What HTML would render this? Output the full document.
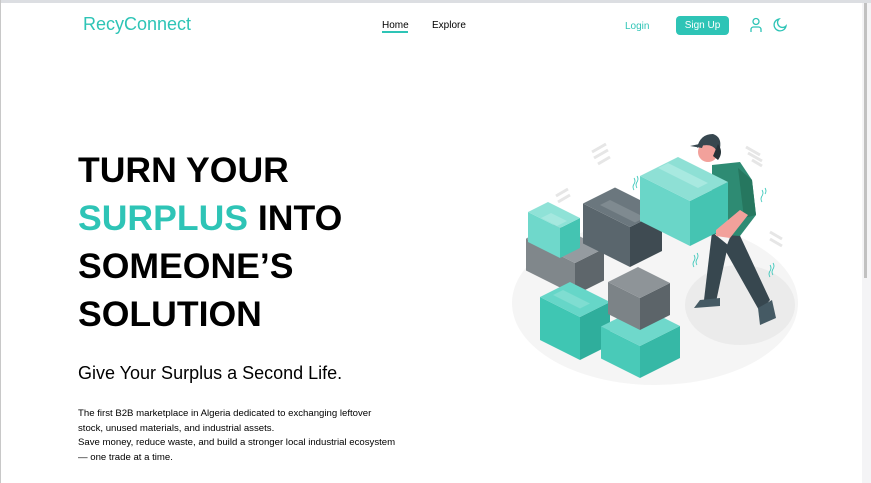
<!DOCTYPE html>
<html><head><meta charset="utf-8"><style>
*{margin:0;padding:0;box-sizing:border-box}
body{width:871px;height:483px;overflow:hidden;background:#fff;font-family:"Liberation Sans",Arial,sans-serif;position:relative}
.topb{position:absolute;left:0;top:0;width:871px;height:3px;background:#dcdee2}
.leftb{position:absolute;left:0;top:0;width:1px;height:483px;background:#c8c8c8}
.track{position:absolute;left:862px;top:3px;width:9px;height:480px;background:#f4f4f6}
.thumb{position:absolute;left:864px;top:3px;width:3px;height:275px;background:#c1c1c1}
.abs{position:absolute;white-space:nowrap}
.logo{left:83px;top:14px;font-size:18px;color:#2ec4b6}
.nav{font-size:10px;color:#000;top:20px}
.ul{position:absolute;left:382px;top:31px;width:26px;height:2px;background:#2ec4b6}
.login{left:625px;top:21px;font-size:10px;color:#2ec4b6}
.btn{left:676px;top:16px;width:53px;height:19px;background:#2ec4b6;border-radius:4px;color:#fff;font-size:10px;text-align:center;line-height:19px}
h1{position:absolute;left:78px;top:146px;font-size:35.6px;line-height:48px;font-weight:700;color:#000}
h1 span{color:#2ec4b6}
.sub{left:78px;top:363px;font-size:18px;color:#000}
.p{left:78px;top:407px;font-size:9.6px;line-height:14.6px;color:#000}
</style></head><body>
<div class="topb"></div><div class="leftb"></div>
<div class="track"></div><div class="thumb"></div>
<div class="abs logo">RecyConnect</div>
<div class="abs nav" style="left:382px">Home</div>
<div class="ul"></div>
<div class="abs nav" style="left:432px">Explore</div>
<div class="abs login">Login</div>
<div class="abs btn">Sign Up</div>
<svg class="abs" style="left:749px;top:17px" width="14" height="16" viewBox="0 0 14 16" fill="none" stroke="#2ec4b6" stroke-width="1.3"><circle cx="7" cy="4.5" r="3"/><path d="M2 15v-2.5a2.5 2.5 0 0 1 2.5-2.5h5a2.5 2.5 0 0 1 2.5 2.5V15"/></svg>
<svg class="abs" style="left:772px;top:17px" width="16" height="16" viewBox="0 0 16 16" fill="none" stroke="#2ec4b6" stroke-width="1.3"><path d="M7 2a6 6 0 1 0 7 7 4.7 4.7 0 0 1-7-7z"/></svg>

<h1>TURN YOUR<br><span>SURPLUS</span> INTO<br>SOMEONE’S<br>SOLUTION</h1>
<div class="abs sub">Give Your Surplus a Second Life.</div>
<div class="abs p">The first B2B marketplace in Algeria dedicated to exchanging leftover<br>stock, unused materials, and industrial assets.<br>Save money, reduce waste, and build a stronger local industrial ecosystem<br>— one trade at a time.</div>

<svg class="abs" style="left:0;top:0" width="871" height="483" viewBox="0 0 871 483">
<ellipse cx="655" cy="303" rx="143" ry="82" fill="#f5f5f5"/>
<ellipse cx="740" cy="305" rx="55" ry="40" fill="#ebebeb"/>
<g stroke="#e6e6e6" stroke-width="3">
<path d="M592 152l14-8M594 158l14-8M598 164l12-7"/><path d="M746 147l14 8M748 153l14 8M752 160l10 6"/>
<path d="M556 196l12-7M558 202l12-7"/><path d="M770 232l12 7M770 239l12 7"/>
</g>
<g><polygon points="526,270.5 575,295 575,263 526,238.5" fill="#80878b"/><polygon points="575,295 604,280.5 604,248.5 575,263" fill="#5e666b"/><polygon points="575,263 604,248.5 555,224 526,238.5" fill="#959ba0"/></g>
<g><polygon points="528,242 560,258 560,228 528,212" fill="#6fd8cb"/><polygon points="560,258 580,248 580,218 560,228" fill="#44c4b2"/><polygon points="560,228 580,218 548,202 528,212" fill="#8fe2d7"/><polygon points="541,218 551,213 567,221 557,226" fill="#a5e8df"/></g>
<g><polygon points="583,243.5 630,267 630,227 583,203.5" fill="#5a666d"/><polygon points="630,267 662,251 662,211 630,227" fill="#3f4b52"/><polygon points="630,227 662,211 615,187.5 583,203.5" fill="#6b777e"/><polygon points="600,205 610,200 645,217.5 635,222.5" fill="#7f8a90"/></g>
<g><polygon points="540,340 580,360 580,317 540,297" fill="#3fc6b3"/><polygon points="580,360 610,345 610,302 580,317" fill="#2fae9c"/><polygon points="580,317 610,302 570,282 540,297" fill="#66d6c8"/><polygon points="553,295 563,290 590,303.5 580,308.5" fill="#7fddd1"/></g>
<g><polygon points="601,358.5 640,378 640,346 601,326.5" fill="#49cab8"/><polygon points="640,378 680,358 680,326 640,346" fill="#36b8a6"/><polygon points="640,346 680,326 641,306.5 601,326.5" fill="#6fd8cb"/></g>
<g><polygon points="608,314 640,330 640,298 608,282" fill="#7c8387"/><polygon points="640,330 670,315 670,283 640,298" fill="#5c6469"/><polygon points="640,298 670,283 638,267 608,282" fill="#8e9498"/></g>
<path d="M712 232 L704 300 L716 302 L728 245 Z" fill="#37474f"/>
<path d="M735 225 L770 300 L760 312 L725 250 Z" fill="#37474f"/>
<path d="M700 300 L720 298 L720 306 L694 308 Z" fill="#455a64"/>
<path d="M758 308 L772 300 L776 318 L760 325 Z" fill="#455a64"/>
<path d="M712 165 L740 162 L752 180 L756 215 L740 236 L712 234 Z" fill="#2e8b73"/>
<path d="M738 168 L752 180 L756 215 L744 218 Z" fill="#26775f"/>
<g><polygon points="640,221 690,246 690,201 640,176" fill="#6ad6c8"/><polygon points="690,246 728,227 728,182 690,201" fill="#45c4b2"/><polygon points="690,201 728,182 678,157 640,176" fill="#8ee0d5"/><polygon points="658,168 668,163 708,183 698,188" fill="#a8e9e0"/></g>
<path d="M740 210 L748 215 L730 238 L716 236 L716 230 Z" fill="#f2a19b"/>
<circle cx="708" cy="152" r="10" fill="#f2a19b"/>
<path d="M697 148 Q700 134 713 134 Q722 137 720 148 L716 150 Q712 143 700 146 Z" fill="#37474f"/>
<path d="M690 146 L704 143 L702 148 Z" fill="#37474f"/>
<path d="M718 144 Q724 152 718 160 L713 156 Z" fill="#263238"/>
<g stroke="#2ec4b6" stroke-width="0.8" fill="none"><path d="M634 178q2 3 0 6q-2 3 0 6M637 176q2 3 0 6q-2 3 0 6"/><path d="M694 255q2 3 0 6q-2 3 0 6M697 253q2 3 0 6q-2 3 0 6"/><path d="M770 265q2 3 0 6q-2 3 0 6M773 263q2 3 0 6q-2 3 0 6"/><path d="M762 190q2 3 0 6q-2 3 0 6M765 188q2 3 0 6"/></g>
</svg>
</body></html>
